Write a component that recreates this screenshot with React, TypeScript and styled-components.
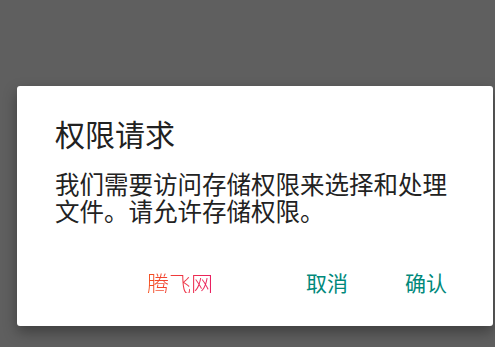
import styled, { createGlobalStyle } from "styled-components";

const GlobalStyle = createGlobalStyle`
  html, body {
    margin: 0;
    padding: 0;
    background: #5f5f5f;
  }
  body {
    font-family: "Noto Sans CJK SC", "Noto Sans", sans-serif;
    overflow: hidden;
  }
`;

const Screen = styled.div`
  width: 495px;
  height: 347px;
  padding-top: 86px;
  padding-left: 17px;
  box-sizing: border-box;
`;

const Dialog = styled.div`
  width: 476px;
  height: 240px;
  box-sizing: border-box;
  background: #ffffff;
  border-radius: 3px;
  box-shadow: 0 6px 14px rgba(0, 0, 0, 0.35);
  padding: 32px 46px 0 38px;
  display: flex;
  flex-direction: column;
`;

const Title = styled.h2`
  margin: 0;
  font-size: 30px;
  line-height: 30px;
  font-weight: 400;
  color: #212121;
`;

const Message = styled.p`
  margin: 22px 0 0;
  font-size: 24.5px;
  line-height: 27px;
  color: #222222;
`;

const Actions = styled.div`
  margin-top: 47px;
  display: flex;
  justify-content: flex-end;
  align-items: center;
  gap: 57px;
`;

const ActionButton = styled.button<{ $spaceAfter?: number }>`
  border: none;
  background: none;
  padding: 0;
  font-family: inherit;
  font-size: 21px;
  line-height: 21px;
  color: #00897b;
  cursor: pointer;
  margin-right: ${(p) => (p.$spaceAfter ? p.$spaceAfter - 57 : 0)}px;
`;

const BrandButton = styled(ActionButton)`
  font-size: 22px;
  line-height: 22px;
  font-weight: 300;
  background: linear-gradient(to right, #f4511e, #e91e63);
  -webkit-background-clip: text;
  background-clip: text;
  color: transparent;
`;

export default function App() {
  return (
    <>
      <GlobalStyle />
      <Screen>
        <Dialog>
          <Title>权限请求</Title>
          <Message>我们需要访问存储权限来选择和处理文件。请允许存储权限。</Message>
          <Actions>
            <BrandButton $spaceAfter={93}>腾飞网</BrandButton>
            <ActionButton>取消</ActionButton>
            <ActionButton>确认</ActionButton>
          </Actions>
        </Dialog>
      </Screen>
    </>
  );
}
